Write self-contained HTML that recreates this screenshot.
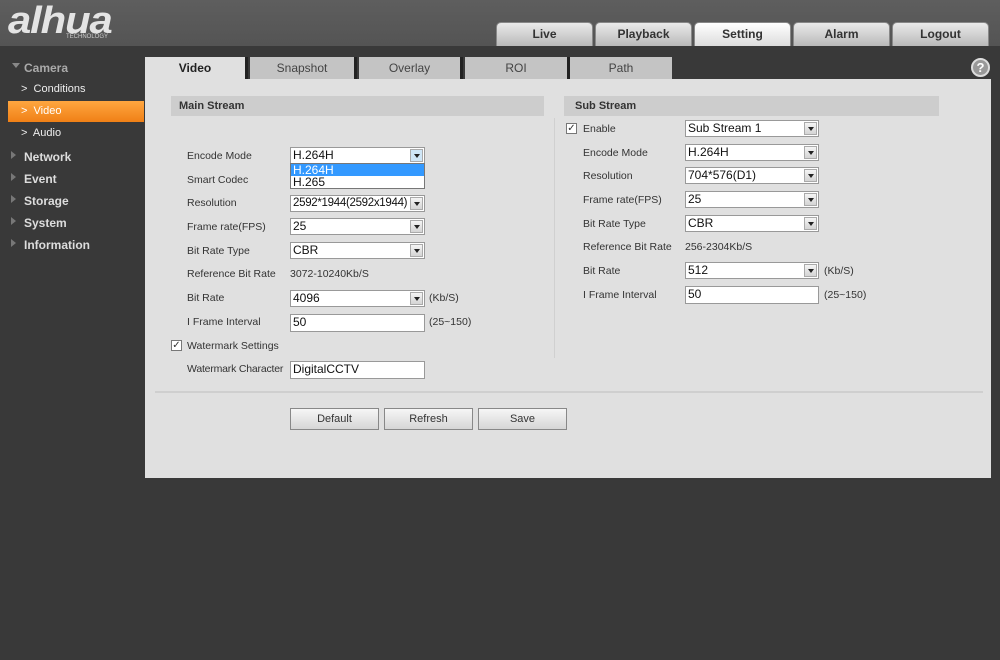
<!DOCTYPE html>
<html><head><meta charset="utf-8"><style>
*{margin:0;padding:0;box-sizing:border-box}
body{width:1000px;height:660px;background:#393939;font-family:"Liberation Sans",Arial,sans-serif;position:relative;overflow:hidden;font-size:11px;color:#333}
.a{position:absolute}
#hdr{left:0;top:0;width:1000px;height:46px;background:linear-gradient(#5e5e5e,#545454)}
.tt{position:absolute;top:22px;height:24px;width:97px;border-radius:5px 5px 0 0;background:linear-gradient(#eaeaea,#b9b9b9);border:1px solid #888;border-bottom:none;font-weight:bold;font-size:12px;color:#333;text-align:center;line-height:23px}
.tt.on{background:linear-gradient(#fff,#dcdcdc)}
.st{position:absolute;top:57px;height:22px;background:#c4c4c4;border-right:3px solid #222;text-align:center;line-height:22px;font-size:12px;color:#444}
.nav{position:absolute;left:24px;color:#ddd;font-size:12px;font-weight:bold}
.sub{position:absolute;left:21px;color:#eee;font-size:11px}
.lb{position:absolute;font-size:10.5px;color:#333;white-space:nowrap}
.sel{position:absolute;height:17px;background:#fff;border:1px solid #999;font-size:12px;line-height:15px;padding-left:2px;color:#111;white-space:nowrap;overflow:hidden}
.sel i{position:absolute;right:1px;top:1px;width:13px;height:13px;background:linear-gradient(#f4f4f4,#d4d4d4);border:1px solid #aaa}
.sel i:after{content:"";position:absolute;left:3px;top:4px;border:3px solid transparent;border-top:4px solid #222}
.cb{position:absolute;width:11px;height:11px;border:1px solid #777;background:#fff;font-size:10px;line-height:9px;text-align:center;color:#333}
.btn{position:absolute;top:408px;width:89px;height:22px;background:linear-gradient(#f6f6f6,#d6d6d6);border:1px solid #888;text-align:center;line-height:20px;font-size:11px;color:#333}
</style></head><body>
<div id="hdr" class="a"></div>
<div class="a" style="left:8px;top:0px;font-size:38px;font-weight:bold;font-style:italic;color:#e4e4e4;letter-spacing:-1px;transform:scaleX(1.1);transform-origin:left">alhua</div>
<div class="a" style="left:66px;top:34px;font-size:6px;color:#ccc">TECHNOLOGY</div>
<div class="tt" style="left:496px">Live</div>
<div class="tt" style="left:595px">Playback</div>
<div class="tt on" style="left:694px">Setting</div>
<div class="tt" style="left:793px">Alarm</div>
<div class="tt" style="left:892px">Logout</div>

<div class="a" style="left:12px;top:63px;border:4px solid transparent;border-top:5px solid #888"></div>
<div class="nav" style="top:61px;color:#aaa">Camera</div>
<div class="sub" style="top:83px">&gt;&nbsp; Conditions</div>
<div class="a" style="left:8px;top:101px;width:136px;height:21px;background:linear-gradient(#ffa640,#f08016)"></div>
<div class="sub" style="top:105px;color:#fff">&gt;&nbsp; Video</div>
<div class="sub" style="top:127px">&gt;&nbsp; Audio</div>
<div class="a" style="left:11px;top:151px;border:4px solid transparent;border-left:5px solid #777"></div><div class="nav" style="top:150px">Network</div>
<div class="a" style="left:11px;top:173px;border:4px solid transparent;border-left:5px solid #777"></div><div class="nav" style="top:172px">Event</div>
<div class="a" style="left:11px;top:195px;border:4px solid transparent;border-left:5px solid #777"></div><div class="nav" style="top:194px">Storage</div>
<div class="a" style="left:11px;top:217px;border:4px solid transparent;border-left:5px solid #777"></div><div class="nav" style="top:216px">System</div>
<div class="a" style="left:11px;top:239px;border:4px solid transparent;border-left:5px solid #777"></div><div class="nav" style="top:238px">Information</div>

<div class="a" style="left:145px;top:79px;width:846px;height:399px;background:#e0e0e0"></div>
<div class="st" style="left:145px;width:103px;background:#e0e0e0;font-weight:bold;color:#222">Video</div>
<div class="st" style="left:250px;width:107px">Snapshot</div>
<div class="st" style="left:359px;width:104px">Overlay</div>
<div class="st" style="left:465px;width:105px">ROI</div>
<div class="st" style="left:570px;width:102px;border-right:none">Path</div>
<div class="a" style="left:971px;top:58px;width:19px;height:19px;border-radius:50%;background:#999;border:2px solid #ddd;color:#fff;font-weight:bold;font-size:13px;text-align:center;line-height:15px">?</div>

<div class="a" style="left:171px;top:96px;width:373px;height:20px;background:#cdcdcd;font-weight:bold;line-height:20px;padding-left:8px;font-size:11px">Main Stream</div>
<div class="a" style="left:564px;top:96px;width:375px;height:20px;background:#cdcdcd;font-weight:bold;line-height:20px;padding-left:11px;font-size:11px">Sub Stream</div>
<div class="a" style="left:554px;top:118px;width:1px;height:240px;background:#d0d0d0"></div>

<div class="lb" style="left:187px;top:150px">Encode Mode</div>
<div class="lb" style="left:187px;top:174px">Smart Codec</div>
<div class="lb" style="left:187px;top:197px">Resolution</div>
<div class="lb" style="left:187px;top:221px">Frame rate(FPS)</div>
<div class="lb" style="left:187px;top:245px">Bit Rate Type</div>
<div class="lb" style="left:187px;top:268px">Reference Bit Rate</div>
<div class="lb" style="left:187px;top:292px">Bit Rate</div>
<div class="lb" style="left:187px;top:316px">I Frame Interval</div>
<div class="cb" style="left:171px;top:340px">✓</div>
<div class="lb" style="left:187px;top:340px">Watermark Settings</div>
<div class="lb" style="left:187px;top:363px;letter-spacing:-0.2px">Watermark Character</div>

<div class="sel" style="left:290px;top:147px;width:135px">H.264H<i style="background:#cfe6f7"></i></div>
<div class="a" style="left:290px;top:163px;width:135px;height:26px;background:#fff;border:1px solid #777;font-size:12px;line-height:12px">
<div style="background:#3399ff;color:#fff;padding-left:2px">H.264H</div><div style="padding-left:2px;color:#111">H.265</div></div>
<div class="sel" style="left:290px;top:195px;width:135px;font-size:11.5px;letter-spacing:-0.3px">2592*1944(2592x1944)<i></i></div>
<div class="sel" style="left:290px;top:218px;width:135px">25<i></i></div>
<div class="sel" style="left:290px;top:242px;width:135px">CBR<i></i></div>
<div class="lb" style="left:290px;top:268px">3072-10240Kb/S</div>
<div class="sel" style="left:290px;top:290px;width:135px">4096<i></i></div>
<div class="lb" style="left:429px;top:292px">(Kb/S)</div>
<div class="sel" style="left:290px;top:314px;width:135px;height:18px">50</div>
<div class="lb" style="left:429px;top:316px">(25~150)</div>
<div class="sel" style="left:290px;top:361px;width:135px;height:18px">DigitalCCTV</div>

<div class="cb" style="left:566px;top:123px">✓</div>
<div class="lb" style="left:583px;top:123px">Enable</div>
<div class="lb" style="left:583px;top:147px">Encode Mode</div>
<div class="lb" style="left:583px;top:170px">Resolution</div>
<div class="lb" style="left:583px;top:194px">Frame rate(FPS)</div>
<div class="lb" style="left:583px;top:218px">Bit Rate Type</div>
<div class="lb" style="left:583px;top:241px">Reference Bit Rate</div>
<div class="lb" style="left:583px;top:265px">Bit Rate</div>
<div class="lb" style="left:583px;top:289px">I Frame Interval</div>
<div class="sel" style="left:685px;top:120px;width:134px">Sub Stream 1<i></i></div>
<div class="sel" style="left:685px;top:144px;width:134px">H.264H<i></i></div>
<div class="sel" style="left:685px;top:167px;width:134px">704*576(D1)<i></i></div>
<div class="sel" style="left:685px;top:191px;width:134px">25<i></i></div>
<div class="sel" style="left:685px;top:215px;width:134px">CBR<i></i></div>
<div class="lb" style="left:685px;top:241px">256-2304Kb/S</div>
<div class="sel" style="left:685px;top:262px;width:134px">512<i></i></div>
<div class="lb" style="left:824px;top:265px">(Kb/S)</div>
<div class="sel" style="left:685px;top:286px;width:134px;height:18px">50</div>
<div class="lb" style="left:824px;top:289px">(25~150)</div>

<div class="a" style="left:155px;top:391px;width:828px;height:2px;background:#cfcfcf"></div>
<div class="btn" style="left:290px">Default</div>
<div class="btn" style="left:384px">Refresh</div>
<div class="btn" style="left:478px">Save</div>
</body></html>
